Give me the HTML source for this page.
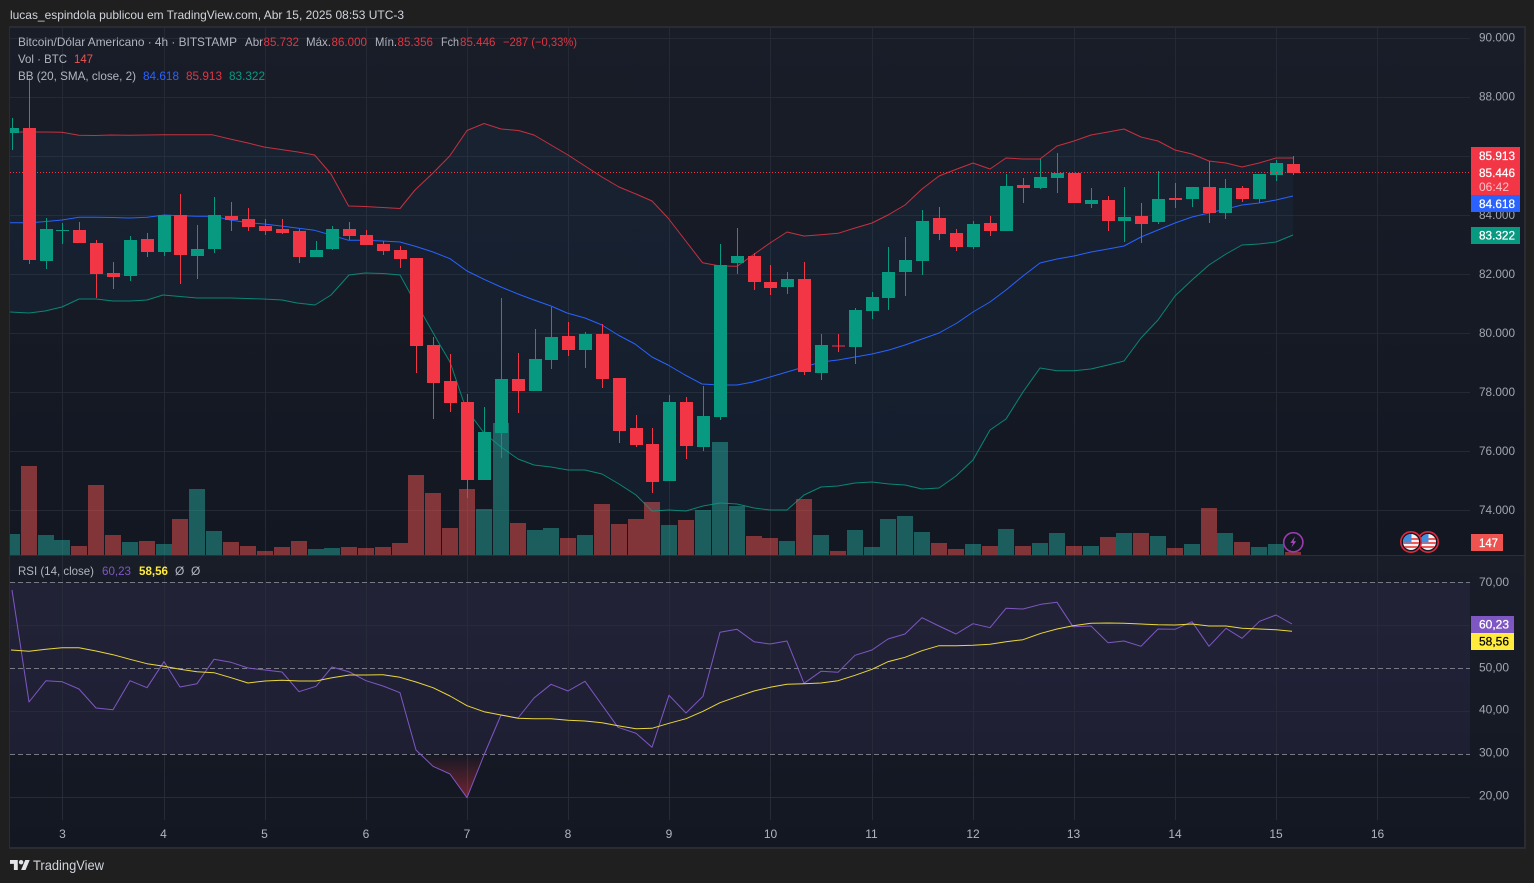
<!DOCTYPE html>
<html lang="pt"><head><meta charset="utf-8"><title>Bitcoin/Dólar Americano</title>
<style>
html,body{margin:0;padding:0;background:#1f1f1f;width:1534px;height:883px;overflow:hidden}
svg{display:block}
text{font-family:"Liberation Sans",sans-serif;font-size:12px;fill:#b2b5be}
.a{fill:#a3a6af}
.t{fill:#fff;stroke:#fff;stroke-width:.25}
.r{fill:#e03542}
.c{fill:#b2b5be}
</style></head><body>
<svg width="1534" height="883" viewBox="0 0 1534 883" xmlns="http://www.w3.org/2000/svg">
<defs>
<linearGradient id="bg1" x1="0" y1="0" x2="0" y2="1"><stop offset="0" stop-color="#191d28"/><stop offset="1" stop-color="#131722"/></linearGradient>
<linearGradient id="os" x1="0" y1="754" x2="0" y2="798" gradientUnits="userSpaceOnUse"><stop offset="0" stop-color="#f23645" stop-opacity="0"/><stop offset="1" stop-color="#f23645" stop-opacity=".42"/></linearGradient>
<clipPath id="main"><rect x="10" y="28" width="1460" height="527"/></clipPath>
<clipPath id="up"><polygon points="10,132 29,132 46,132 62,132.3 79,135.3 95,135.5 111,135 128,135.3 147,135 164,134.8 180,134.7 197,134.7 212,134.7 230,139 248,143 264,147 281,149.5 298,152 314.6,155 331,174 348.6,206 365,206.5 383,207.5 400,208.5 415,190 433,173 449.7,156 467,130.5 484,123.5 501,129 518.6,130.5 534,135 551,145 568,155 585,166 602,177 619,187 636,194 652,201 668,218 685,240 702.5,262.7 720,266 737,266.3 753,255 770,243 787,232 804,236 821,234.7 838,233.3 855,228 872,223 888,215 905,205 922,189 939,176 957,169 973,163 990,169 1006,158 1023,159 1040,159 1057,146 1074,141 1091,135 1108,132 1124,129 1141,137 1158,141 1175,150 1192,154 1209,161 1226,163 1242,167 1259,163 1276,158 1293,158 1293,600 10,600"/></clipPath>
<clipPath id="f1"><circle cx="1411" cy="542" r="8"/></clipPath>
<clipPath id="f2"><circle cx="1428" cy="542" r="8"/></clipPath>
</defs>

<rect width="1534" height="883" fill="#1f1f1f"/>
<text x="10" y="19" textLength="394" lengthAdjust="spacingAndGlyphs" style="fill:#d1d4dc">lucas_espindola publicou em TradingView.com, Abr 15, 2025 08:53 UTC-3</text>

<!-- frame -->
<rect x="9" y="26" width="1517" height="823" fill="#2a2c31"/>
<rect x="10" y="28" width="1514" height="527" fill="url(#bg1)"/>
<rect x="10" y="556" width="1514" height="291" fill="url(#bg1)"/>
<rect x="10" y="555" width="1514" height="1" fill="#2a2e39"/>

<!-- main grid -->
<g stroke="#252934" stroke-width="1" shape-rendering="crispEdges" fill="none">
<path d="M10 38.5H1470M10 97.5H1470M10 156.5H1470M10 215.5H1470M10 274.5H1470M10 333.5H1470M10 392.5H1470M10 451.5H1470M10 510.5H1470"/>
<path d="M62.5 28V555M164.5 28V555M265.5 28V555M366.5 28V555M467.5 28V555M568.5 28V555M669.5 28V555M770.5 28V555M872.5 28V555M973.5 28V555M1074.5 28V555M1175.5 28V555M1276.5 28V555M1377.5 28V555"/>
</g>

<g clip-path="url(#main)">
<!-- volume -->
<g transform="translate(-.5 0)" fill="none" stroke-width="16" shape-rendering="crispEdges" stroke-opacity=".5">
<path stroke="#26a69a" d="M12.5 555V534M46.5 555V535M62.5 555V540M130.5 555V542M164.5 555V544M197.5 555V489M214.5 555V531M316.5 555V549M332.5 555V548M484.5 555V509M501.5 555V423M535.5 555V530M551.5 555V528M585.5 555V535M669.5 555V525M703.5 555V510M720.5 555V442M737.5 555V506M787.5 555V541M821.5 555V535M872.5 555V547M855.5 555V530M888.5 555V519M905.5 555V516M922.5 555V532M973.5 555V544M1006.5 555V529M1040.5 555V543M1057.5 555V533M1091.5 555V546M1124.5 555V533M1158.5 555V536M1192.5 555V544M1225.5 555V533M1259.5 555V547M1276.5 555V544"/>
<path stroke="#ef5350" d="M29.5 555V466M79.5 555V546M96.5 555V485M113.5 555V535M147.5 555V541M180.5 555V519M231.5 555V542M248.5 555V546M265.5 555V551M282.5 555V547M299.5 555V541M349.5 555V547M366.5 555V548M383.5 555V547M400.5 555V543M416.5 555V475M433.5 555V493M450.5 555V528M467.5 555V489M518.5 555V523M568.5 555V538M602.5 555V504M619.5 555V524M636.5 555V519M652.5 555V502M686.5 555V520M754.5 555V536M770.5 555V538M804.5 555V499M838.5 555V551M939.5 555V543M956.5 555V549M990.5 555V546M1023.5 555V546M1074.5 555V546M1108.5 555V537M1141.5 555V533M1175.5 555V548M1209.5 555V508M1242.5 555V542M1293.5 555V552"/>
</g>

<!-- BB fill -->
<g clip-path="url(#up)"><polygon fill="#2196f3" fill-opacity=".05" points="10,312 29,313 45,311 62,307 79,299 96,299 113,301 130,301 147,300 163,295 180,296.5 197,298 214,298 230,298 247,298.5 263,299 282,300 297,303 315,305 331,295 349,275 365,273 383,273.5 400,275 411,295 423,315 440,345 450,362 463,400 467,410 484,433 501,447 518,459 534,465 551,467 568,470 585,470 602,474 619,484 636,495 652,511 669,510 686,511 703,506 720,503 737,504 754,508 770,510 787,510 804,495 821,487 838,486 855,483 872,482 889,484 905,485 922,489 939,488 956,476 973,460 990,430 1006,419 1023,392 1040,368 1057,370.7 1074,370.7 1091,369 1108,365 1124,361 1141,338 1158,320 1175,296 1192,280 1209,265 1226,254 1242,245 1259,244 1276,242 1293,235 1293,0 10,0"/></g>

<!-- BB lines -->
<g fill="none" stroke-width="1" stroke-linejoin="round">
<polyline stroke="#f23645" stroke-opacity=".8" points="10,132 29,132 46,132 62,132.3 79,135.3 95,135.5 111,135 128,135.3 147,135 164,134.8 180,134.7 197,134.7 212,134.7 230,139 248,143 264,147 281,149.5 298,152 314.6,155 331,174 348.6,206 365,206.5 383,207.5 400,208.5 415,190 433,173 449.7,156 467,130.5 484,123.5 501,129 518.6,130.5 534,135 551,145 568,155 585,166 602,177 619,187 636,194 652,201 668,218 685,240 702.5,262.7 720,266 737,266.3 753,255 770,243 787,232 804,236 821,234.7 838,233.3 855,228 872,223 888,215 905,205 922,189 939,176 957,169 973,163 990,169 1006,158 1023,159 1040,159 1057,146 1074,141 1091,135 1108,132 1124,129 1141,137 1158,141 1175,150 1192,154 1209,161 1226,163 1242,167 1259,163 1276,158 1293,158"/>
<polyline stroke="#2962ff" points="10,222.7 30,222.7 46,221.5 62,220 79,217.3 96,217.3 113,217.5 130,218 147,217.3 164.5,215 180,215.8 197,216.3 214,216.3 230,220 249,222.7 264,224 281,226 298.5,228.3 314.6,230.3 331,235 348.6,240.3 365,240.3 383,241 400,242 416,246.5 433,252 450,258.7 467,271 484,279.3 501,287 518,294 534,300 551,306 567,313 585,318 602,325 618,335 635,344 652,357 668,365 685,375 702,384 720,385 737,385 753,382 770,377 787,372 804,367 821,362 838,360 855,357 872,354 889,350 905,345 922,339 939,333 957,323 973,312 990,302 1006,290 1023,276 1040,263 1057,259 1074,256 1091,252 1108,249 1124,246 1141,237 1158,230 1175,223 1192,217 1209,213 1226,209 1242,205 1259,203 1276,200 1293,196"/>
<polyline stroke="#089981" stroke-opacity=".85" points="10,312 29,313 45,311 62,307 79,299 96,299 113,301 130,301 147,300 163,295 180,296.5 197,298 214,298 230,298 247,298.5 263,299 282,300 297,303 315,305 331,295 349,275 365,273 383,273.5 400,275 411,295 423,315 440,345 450,362 463,400 467,410 484,433 501,447 518,459 534,465 551,467 568,470 585,470 602,474 619,484 636,495 652,511 669,510 686,511 703,506 720,503 737,504 754,508 770,510 787,510 804,495 821,487 838,486 855,483 872,482 889,484 905,485 922,489 939,488 956,476 973,460 990,430 1006,419 1023,392 1040,368 1057,370.7 1074,370.7 1091,369 1108,365 1124,361 1141,338 1158,320 1175,296 1192,280 1209,265 1226,254 1242,245 1259,244 1276,242 1293,235"/>
</g>

<!-- candles -->
<g fill="none" shape-rendering="crispEdges">
<!-- wicks -->
<path stroke="#089981" stroke-width="1" d="M12.5 118V150M46.5 218V269M62.5 223V244M130.5 236V281M164.5 215V256M197.5 225V279M214.5 197V253M316.5 241V257M332.5 226V250M484.5 407V480M501.5 298V458M535.5 329V391M551.5 307V369M585.5 332V368M669.5 395V481M703.5 386V451M720.5 244V420M737.5 228V274M787.5 272V294M821.5 334V380M855.5 308V364M872.5 292V319M888.5 247V310M905.5 237V296M922.5 210V275M973.5 221V249M1006.5 174V231M1040.5 159V189M1057.5 153V193M1091.5 188V208M1124.5 187V242M1158.5 171V224M1192.5 187V207M1225.5 179V219M1259.5 174V203M1276.5 160V181"/>
<path stroke="#f23645" stroke-width="1" d="M29.5 78V264M79.5 222V243M96.5 240V298M113.5 262V289M147.5 233V257M180.5 194V284M231.5 202V231M248.5 208V231M265.5 219V235M282.5 219V234M299.5 229V263M349.5 222V240M366.5 230V245M383.5 241V255M400.5 246V268M416.5 258V373M433.5 337V419M450.5 354V412M467.5 394V498M518.5 353V413M568.5 322V356M602.5 324V388M619.5 378V443M636.5 415V447M652.5 428V493M686.5 397V459M754.5 253V290M770.5 265V295M804.5 262V375M838.5 334V352M939.5 207V240M956.5 229V251M990.5 216V236M1023.5 178V203M1074.5 173V203M1108.5 196V231M1141.5 203V243M1175.5 183V208M1209.5 161V223M1242.5 186V202M1293.5 156V175"/>
<!-- bodies -->
<path stroke="#089981" stroke-width="13" d="M12.5 128V133M46.5 229V261M62.5 230V231M130.5 240V276M164.5 215V252M197.5 249V256M214.5 215V249M316.5 250V257M332.5 229V249M484.5 432V480M501.5 379V433M535.5 359V391M551.5 337V360M585.5 334V350M669.5 402V481M703.5 416V447M720.5 265V417M737.5 256V263M787.5 279V287M821.5 345V373M855.5 310V347M872.5 297V311M888.5 272V298M905.5 260V272M922.5 221V261M973.5 224V247M1006.5 186V231M1040.5 177V188M1057.5 173V178M1091.5 200V204M1124.5 217V221M1158.5 199V222M1192.5 187V199M1225.5 188V213M1259.5 174V199M1276.5 163V175"/>
<path stroke="#f23645" stroke-width="13" d="M29.5 128V260M79.5 230V243M96.5 243V274M113.5 273V277M147.5 239V252M180.5 215V255M231.5 216V220M248.5 219V227M265.5 226V231M282.5 229V233M299.5 231V257M349.5 229V236M366.5 235V245M383.5 244V251M400.5 250V259M416.5 258V346M433.5 345V383M450.5 381V403M467.5 402V480M518.5 379V391M568.5 336V350M602.5 334V379M619.5 378V431M636.5 428V445M652.5 444V482M686.5 402V446M754.5 256V282M770.5 282V288M804.5 279V372M838.5 345.5V346.5M939.5 218V234M956.5 233V247M990.5 223V231M1023.5 185V188M1074.5 173V203M1108.5 200V221M1141.5 216V224M1175.5 198V200M1209.5 187V213M1242.5 188V199M1293.5 164V173"/>
</g>
</g>

<!-- last price line -->
<path d="M10 172.5H1471" stroke="#f23645" stroke-width="1" stroke-dasharray="1 2" fill="none" shape-rendering="crispEdges"/>

<!-- events -->
<circle cx="1293.3" cy="542.3" r="9.6" fill="#131722" stroke="#9c3bb0" stroke-width="1.6"/>
<path d="M1295 536.5l-4.6 6.4h2.6l-1.6 4.6 4.8-6.3h-2.6z" fill="#ab47bc"/>
<g>
<circle cx="1428" cy="542" r="10.2" fill="#131722" stroke="#e0283c" stroke-width="1.6"/>
<g clip-path="url(#f2)"><rect x="1420" y="534" width="16" height="16" fill="#f4f4f4"/><path d="M1420 538h16v2h-16zM1420 542h16v2h-16zM1420 546h16v2h-16z" fill="#ef5a5a"/><rect x="1420" y="534" width="8.5" height="8.5" fill="#3f8fe0"/></g>
<circle cx="1411" cy="542" r="10.2" fill="#131722" stroke="#e0283c" stroke-width="1.6"/>
<g clip-path="url(#f1)"><rect x="1403" y="534" width="16" height="16" fill="#f4f4f4"/><path d="M1403 538h16v2h-16zM1403 542h16v2h-16zM1403 546h16v2h-16z" fill="#ef5a5a"/><rect x="1403" y="534" width="8.5" height="8.5" fill="#3f8fe0"/></g>
</g>

<!-- RSI band -->
<rect x="10" y="582" width="1460" height="172" fill="#7e57c2" fill-opacity=".1"/>
<g stroke="#272b37" stroke-width="1" shape-rendering="crispEdges" fill="none">
<path d="M10 625.5H1470M10 711.5H1470M10 797.5H1470"/>
<path d="M62.5 556V820M164.5 556V820M265.5 556V820M366.5 556V820M467.5 556V820M568.5 556V820M669.5 556V820M770.5 556V820M872.5 556V820M973.5 556V820M1074.5 556V820M1175.5 556V820M1276.5 556V820M1377.5 556V820"/>
</g>
<path d="M10 582.5H1470M10 668.5H1470M10 754.5H1470" stroke="#787b86" stroke-width="1" stroke-dasharray="5 3" fill="none" shape-rendering="crispEdges"/>
<polygon points="420,754 433,766.3 450,774 467,797.7 483.6,754" fill="url(#os)"/>
<polyline fill="none" stroke="#7e57c2" stroke-width="1" stroke-linejoin="round" points="12,590 29,702 46,680.7 62,681.7 79,689 96,708 113,709.7 130,680.7 147,687.7 164,661.7 180,687 197,683.7 214,659.3 231,662.3 248,668 265,670 282,672 299,691.7 316,686.3 332,667 349.5,672 366,680.7 383,686 400,692.7 416,750 433,766.3 450,774 467,797.7 484,755 501,715 518,718 534,698 551,684.3 568,691 585,681.3 602,705 618,727.3 636,733.3 652,747.3 669,695.3 686,713 703,696.3 720,632.3 737,629.3 754,641.7 770,644 787,641 804,683.3 821,671.3 838,672.3 855,655.3 872,650 888,639 905,634 922,617.7 939,626 956,634 973,623.7 990,627.7 1006,608.3 1023,609 1041,604.3 1057,602.3 1073,626.7 1091,626 1108,642.7 1124,641 1141,646.3 1158,629 1175,629.3 1192,621.7 1209,646.3 1226,628.3 1242,638.3 1259.5,621.3 1276,615 1292,624"/>
<polyline fill="none" stroke="#ffeb3b" stroke-opacity=".9" stroke-width="1" stroke-linejoin="round" points="11,650 29,651.3 46,649.3 62,647.7 79,647.7 96,651 113,654.7 130,659.3 147,663.7 164,666.3 180,669.3 197,671.7 214,672.7 231,677.7 248,683 265,681 282,680.3 299,681 316,681 332,677.7 349.5,675 366,675 383,674.7 400,677.3 416,682 433,687.7 450,696 467,705.7 484,711.7 501,715 518,718.3 534,718.7 551,718.7 568,720.3 585,721 602,722.7 618,725.7 636,728.7 652,728.3 669,723.3 686,718.7 703,711.3 720,702.7 737,696.7 754,691 770,687.3 787,684.3 804,683.7 821,683 838,680.7 855,675.3 872,669.3 888,661.7 905,657.3 922,650.7 939,645.7 956,645.7 973,645.3 990,644.3 1006,641.7 1023,639.7 1041,633.3 1057,629 1073,625.7 1091,623.3 1108,623 1124,623.3 1141,624 1158,624.7 1175,625 1192,624 1209,626 1226,626 1242,628.3 1259.5,629 1276,629.7 1292,631.3"/>

<!-- legend -->
<text x="18" y="46" textLength="219" lengthAdjust="spacingAndGlyphs">Bitcoin/Dólar Americano · 4h · BITSTAMP</text>
<text x="245" y="46" textLength="18" lengthAdjust="spacingAndGlyphs">Abr</text>
<text x="263.5" y="46" textLength="35.5" lengthAdjust="spacingAndGlyphs" class="r">85.732</text>
<text x="306" y="46" textLength="25" lengthAdjust="spacingAndGlyphs">Máx.</text>
<text x="331.5" y="46" textLength="35.5" lengthAdjust="spacingAndGlyphs" class="r">86.000</text>
<text x="375" y="46" textLength="22" lengthAdjust="spacingAndGlyphs">Mín.</text>
<text x="397.5" y="46" textLength="35.5" lengthAdjust="spacingAndGlyphs" class="r">85.356</text>
<text x="441" y="46" textLength="18" lengthAdjust="spacingAndGlyphs">Fch</text>
<text x="460" y="46" textLength="35.5" lengthAdjust="spacingAndGlyphs" class="r">85.446</text>
<text x="503" y="46" textLength="74" lengthAdjust="spacingAndGlyphs" class="r">−287 (−0,33%)</text>
<text x="18" y="63" textLength="49" lengthAdjust="spacingAndGlyphs">Vol · BTC</text>
<text x="74" y="63" textLength="19" lengthAdjust="spacingAndGlyphs" style="fill:#ef5350">147</text>
<text x="18" y="80" textLength="118" lengthAdjust="spacingAndGlyphs">BB (20, SMA, close, 2)</text>
<text x="143" y="80" textLength="36" lengthAdjust="spacingAndGlyphs" style="fill:#2962ff">84.618</text>
<text x="186" y="80" textLength="36" lengthAdjust="spacingAndGlyphs" class="r">85.913</text>
<text x="229" y="80" textLength="36" lengthAdjust="spacingAndGlyphs" style="fill:#089981">83.322</text>
<text x="18" y="575" textLength="76" lengthAdjust="spacingAndGlyphs">RSI (14, close)</text>
<text x="102" y="575" textLength="29" lengthAdjust="spacingAndGlyphs" style="fill:#7e57c2">60,23</text>
<text x="139" y="575" textLength="29" lengthAdjust="spacingAndGlyphs" style="fill:#ffeb3b;font-weight:700">58,56</text>
<text x="175" y="575" class="c">Ø</text>
<text x="191" y="575" class="c">Ø</text>

<!-- price axis -->
<g class="axis">
<text x="1479" y="41.5" textLength="36" lengthAdjust="spacingAndGlyphs" class="a">90.000</text>
<text x="1479" y="100.5" textLength="36" lengthAdjust="spacingAndGlyphs" class="a">88.000</text>
<text x="1479" y="219" textLength="36" lengthAdjust="spacingAndGlyphs" class="a">84.000</text>
<text x="1479" y="278" textLength="36" lengthAdjust="spacingAndGlyphs" class="a">82.000</text>
<text x="1479" y="337" textLength="36" lengthAdjust="spacingAndGlyphs" class="a">80.000</text>
<text x="1479" y="396" textLength="36" lengthAdjust="spacingAndGlyphs" class="a">78.000</text>
<text x="1479" y="455" textLength="36" lengthAdjust="spacingAndGlyphs" class="a">76.000</text>
<text x="1479" y="514" textLength="36" lengthAdjust="spacingAndGlyphs" class="a">74.000</text>
<text x="1479" y="586" textLength="30" lengthAdjust="spacingAndGlyphs" class="a">70,00</text>
<text x="1479" y="671.7" textLength="30" lengthAdjust="spacingAndGlyphs" class="a">50,00</text>
<text x="1479" y="713.7" textLength="30" lengthAdjust="spacingAndGlyphs" class="a">40,00</text>
<text x="1479" y="756.7" textLength="30" lengthAdjust="spacingAndGlyphs" class="a">30,00</text>
<text x="1479" y="799.7" textLength="30" lengthAdjust="spacingAndGlyphs" class="a">20,00</text>
</g>

<!-- tags -->
<rect x="1471" y="147" width="49" height="48" fill="#f23645"/>
<rect x="1471" y="195" width="49" height="17" fill="#2962ff"/>
<rect x="1471" y="227" width="49" height="17" fill="#089981"/>
<rect x="1471" y="534" width="32" height="17" fill="#ef5350"/>
<rect x="1471" y="616" width="43" height="17" fill="#7e57c2"/>
<rect x="1471" y="633" width="43" height="17" fill="#ffeb3b"/>
<text x="1479" y="160" textLength="36" lengthAdjust="spacingAndGlyphs" class="t">85.913</text>
<text x="1479" y="177" textLength="36" lengthAdjust="spacingAndGlyphs" class="t">85.446</text>
<text x="1479" y="191" textLength="30" lengthAdjust="spacingAndGlyphs" style="fill:#fbc2c7">06:42</text>
<text x="1479" y="208" textLength="36" lengthAdjust="spacingAndGlyphs" class="t">84.618</text>
<text x="1479" y="239.5" textLength="36" lengthAdjust="spacingAndGlyphs" class="t">83.322</text>
<text x="1479" y="547" textLength="19" lengthAdjust="spacingAndGlyphs" class="t">147</text>
<text x="1479" y="628.5" textLength="30" lengthAdjust="spacingAndGlyphs" class="t">60,23</text>
<text x="1479" y="645.5" textLength="30" lengthAdjust="spacingAndGlyphs" style="fill:#000;stroke:#000;stroke-width:.2">58,56</text>

<!-- time axis -->
<g text-anchor="middle">
<text x="62.5" y="838" class="c">3</text>
<text x="163.5" y="838" class="c">4</text>
<text x="264.5" y="838" class="c">5</text>
<text x="366" y="838" class="c">6</text>
<text x="467" y="838" class="c">7</text>
<text x="568" y="838" class="c">8</text>
<text x="669" y="838" class="c">9</text>
<text x="770.5" y="838" class="c">10</text>
<text x="871.5" y="838" class="c">11</text>
<text x="973" y="838" class="c">12</text>
<text x="1073.5" y="838" class="c">13</text>
<text x="1175" y="838" class="c">14</text>
<text x="1276" y="838" class="c">15</text>
<text x="1377.5" y="838" class="c">16</text>
</g>

<!-- logo -->
<g transform="translate(10 857.8) scale(.555)" fill="#e4e5e8">
<path d="M14 22H7V11H0V4h14v18zM28 22h-8l7.5-18h8L28 22z"/><circle cx="20" cy="8" r="4"/>
</g>
<text x="33" y="870" textLength="71" lengthAdjust="spacingAndGlyphs" style="font-size:14px;fill:#d1d4dc">TradingView</text>
</svg>
</body></html>
